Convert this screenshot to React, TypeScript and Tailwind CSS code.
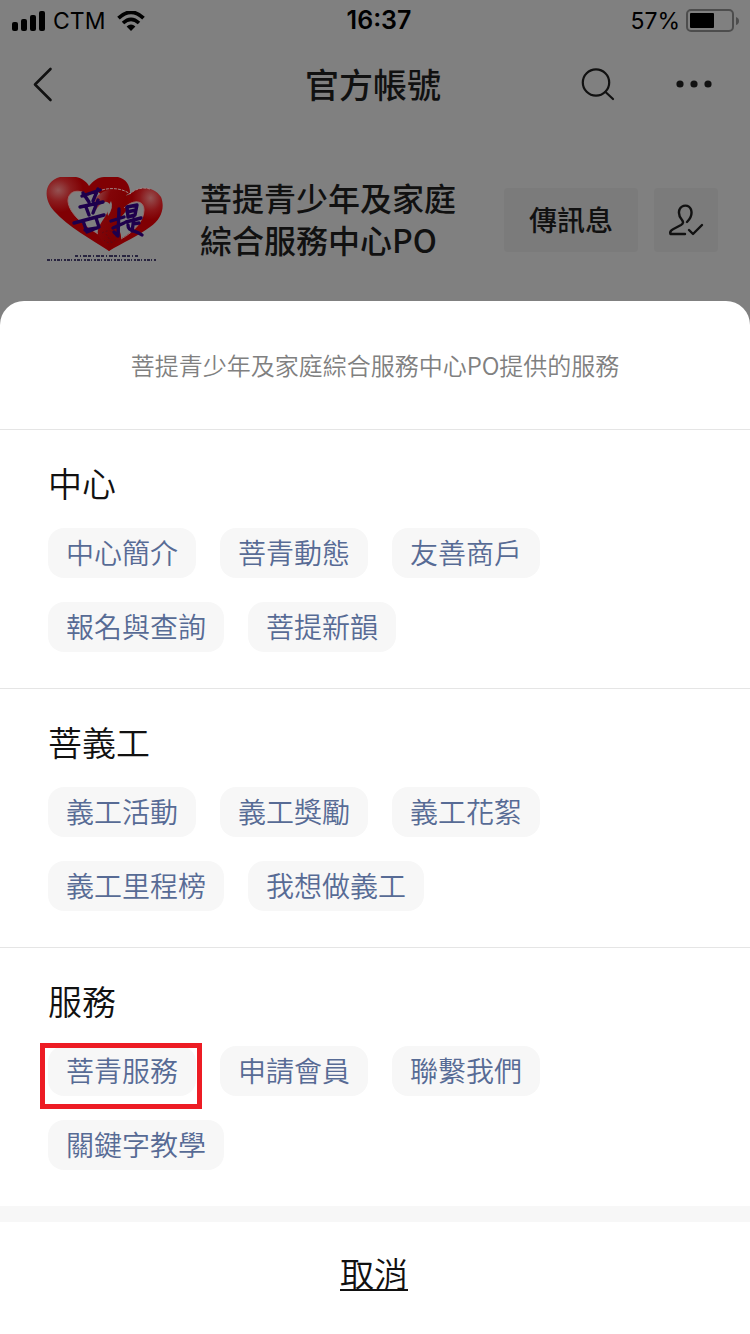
const sections = [
    { title: "中心", items: ["中心簡介", "菩青動態", "友善商戶", "報名與查詢", "菩提新韻"] },
    { title: "菩義工", items: ["義工活動", "義工獎勵", "義工花絮", "義工里程榜", "我想做義工"] },
    { title: "服務", items: ["菩青服務", "申請會員", "聯繫我們", "關鍵字教學"] },
]

const marked = "菩青服務"

function StatusBar() {
    return (
        <div className="grid grid-cols-3 items-center h-10 pt-0.5 px-3 font-['Inter','Liberation_Sans',sans-serif] text-[23px] text-black">
            <div className="flex items-center">
                <svg width="33" height="20" viewBox="0 0 33 20" aria-hidden="true">
                    <rect x="0" y="11" width="6" height="9" rx="2" />
                    <rect x="9" y="8" width="6" height="12" rx="2" />
                    <rect x="18" y="4" width="6" height="16" rx="2" />
                    <rect x="27" y="0" width="6" height="20" rx="2" />
                </svg>
                <span className="ml-2">CTM</span>
                <svg className="ml-3" width="28" height="20" viewBox="0 0 28 20" aria-hidden="true">
                    <path d="M1.5 7.2Q14-4.6 26.5 7.2" fill="none" stroke="black" strokeWidth="3.8" />
                    <path d="M6 12Q14 4.6 22 12" fill="none" stroke="black" strokeWidth="3.6" />
                    <path d="M9.6 15.4Q14 11.6 18.4 15.4L14 20Z" />
                </svg>
            </div>
            <div className="pl-2 text-center text-[25px] font-semibold">16:37</div>
            <div className="flex items-center justify-end">
                <span>57%</span>
                <svg className="ml-1.5 -mr-px" width="53" height="24" viewBox="0 0 53 24" aria-hidden="true">
                    <rect x="1" y="1" width="46" height="21" rx="4" fill="none" stroke="#4d4d4d" strokeWidth="2" />
                    <rect x="4" y="4" width="24" height="15" rx="1" />
                    <path d="M50 8Q53 9 53 12T50 16Z" fill="#4d4d4d" />
                </svg>
            </div>
        </div>
    )
}

function NavBar() {
    return (
        <header className="grid grid-cols-3 items-center h-22 px-8">
            <button type="button" aria-label="返回" className="justify-self-start">
                <svg width="22" height="36" viewBox="0 0 22 36" fill="none" stroke="#111" strokeWidth="2.6" strokeLinecap="round" strokeLinejoin="round">
                    <path d="M18.5 3L3 18.5L18.5 34" />
                </svg>
            </button>
            <h1 className="pb-0.5 pr-1 text-center text-[34px] font-medium whitespace-nowrap">官方帳號</h1>
            <div className="flex items-center justify-end gap-15">
                <button type="button" aria-label="搜尋">
                    <svg width="36" height="34" viewBox="0 0 36 34" fill="none" stroke="#111" strokeWidth="2.2" strokeLinecap="round">
                        <circle cx="16" cy="15.5" r="13.2" />
                        <path d="M25.5 25L33 32" />
                    </svg>
                </button>
                <button type="button" aria-label="更多" className="mr-1.5">
                    <svg width="36" height="8" viewBox="0 0 36 8" fill="#111">
                        <circle cx="4" cy="4" r="3.6" />
                        <circle cx="18" cy="4" r="3.6" />
                        <circle cx="32" cy="4" r="3.6" />
                    </svg>
                </button>
            </div>
        </header>
    )
}

function Logo() {
    return (
        <svg width="118" height="86" viewBox="0 0 118 86" role="img" aria-label="菩提">
            <defs>
                <radialGradient id="shineLeft" cx="0.14" cy="0.18" r="0.3">
                    <stop offset="0" stopColor="#945252" />
                    <stop offset="0.5" stopColor="#8a1c1e" />
                    <stop offset="1" stopColor="#800003" />
                </radialGradient>
                <radialGradient id="shineRight" cx="0.78" cy="0.16" r="0.34">
                    <stop offset="0" stopColor="#945252" />
                    <stop offset="0.6" stopColor="#8a1518" />
                    <stop offset="1" stopColor="#800003" />
                </radialGradient>
                <linearGradient id="ribbon" x1="0" y1="0.1" x2="0.7" y2="0.5">
                    <stop offset="0" stopColor="#8e5555" />
                    <stop offset="0.5" stopColor="#820508" />
                    <stop offset="1" stopColor="#7c0002" />
                </linearGradient>
            </defs>
            {/* left heart, right heart, then the ribbon that ties them */}
            <path fill="url(#shineLeft)" d="M63 74C45 62 22 50 8 34C-4 20-1 4 14 0H30C36 1 41 5 43 9C47 4 52 0 58 0H72C80 2 84 8 84 16L66 26L52 15C48 14 44 16 42 19C36 12 22 12 22 24C23 37 38 48 52 57L64 66Z" />
            <path fill="url(#shineRight)" d="M63 74L62 64L74 62C88 55 98 44 98 33C98 23 87 22 78 31L72 22L84 17C92 8 108 9 115 20C119 30 116 42 104 50C92 59 76 66 63 74Z" />
            <path fill="url(#ribbon)" d="M47 28C51 12 70 8 80 18C86 27 80 36 73 42C70 49 76 56 75 62L63 74L52 58C50 48 62 40 64 28C61 22 55 25 50 33Z" />
            <path fill="none" stroke="#946c6c" strokeWidth="1" d="M42 19C36 12 22 12 22 24C23 37 38 48 52 57M78 31C87 22 98 23 98 33C98 44 88 55 75 62" />
            <path fill="none" stroke="#a18585" strokeWidth="1" strokeDasharray="3 1" d="M56 13C66 10 78 12 84 17C90 11 98 10 104 12" />
            <path fill="#808080" d="M65 24Q68 30 62 39Q60 32 65 24Z" />
            <path fill="none" stroke="#5f0a14" strokeWidth="1" strokeDasharray="2 2" d="M56 56C62 52 70 54 70 60S62 68 58 63M60 57L66 66" />
            <g fill="none" stroke="#1e004c" strokeWidth="3.4" strokeLinecap="round" strokeLinejoin="round">
                <path d="M36 19L54 13M37 16L43 25M52 12L47 24M34 30L57 25M40 30L43 38M52 23L47 36M28 46L58 38M37 44L41 55L53 50L50 41M39 53L51 51" />
                <path d="M65 44L78 40M73 32L72 59L68 55M67 51L78 46M81 30L91 28L89 38L82 40L81 30M81 35L90 33M80 45L95 41M88 42L86 54M87 47L93 46M82 48C82 55 88 52 96 58" />
            </g>
            <path d="M29 79H92" stroke="#28243f" strokeWidth="2" strokeDasharray="3 2 1 2 4 1" />
            <path d="M1 83H110" stroke="#28243f" strokeWidth="2" strokeDasharray="3 1 1 2 2 1" />
        </svg>
    )
}

function Account() {
    return (
        <div className="flex items-center h-30 pl-[46px] pr-8">
            <Logo />
            <h2 className="ml-9 pb-1 flex-1 text-[32px] leading-[42px] font-medium">
                菩提青少年及家庭<br />綜合服務中心PO
            </h2>
            <button type="button" className="h-16 px-[25px] pb-0.5 rounded-sm bg-[#7b7b7b] text-[28px] font-medium">
                傳訊息
            </button>
            <button type="button" aria-label="已關注" className="ml-4 flex items-center justify-center size-16 rounded-sm bg-[#7b7b7b]">
                <svg width="36" height="32" viewBox="0 0 36 32" fill="none" stroke="#111" strokeWidth="2.4" strokeLinecap="round" strokeLinejoin="round">
                    <path d="M17 30H2.5C1.5 27.5 3 26.2 5 25.2L13 21C15.5 19.5 15.5 18 14 16C10.5 12 10.5 8.5 11.5 5.5C14 .3 21 .3 23 5.5C24.3 9.5 23 14 19 18" />
                    <path d="M21 26L25 30L34 21" />
                </svg>
            </button>
        </div>
    )
}

function Chip({ label }: { label: string }) {
    return (
        <li className="relative">
            <button type="button" className="block h-[50px] px-[18px] pb-0.5 rounded-2xl bg-[#f7f7f7] text-[28px] leading-[48px] text-[#576b95]">
                {label}
            </button>
            {label === marked && (
                <span className="absolute -top-[3px] -bottom-[13px] -left-2 -right-1.5 border-5 border-[#ed1c24] pointer-events-none" />
            )}
        </li>
    )
}

function App() {
    return (
        <div className="min-h-screen flex flex-col bg-[#808080] text-[#111] font-['Noto_Sans_CJK_TC',sans-serif]">
            <StatusBar />
            <NavBar />
            <div className="pt-8 pb-[21px]">
                <Account />
            </div>

            <div role="dialog" aria-label="提供的服務" className="flex-1 flex flex-col rounded-t-3xl bg-white font-[350]">
                <p className="h-32 text-center text-2xl leading-[128px] text-[#808080]">
                    菩提青少年及家庭綜合服務中心PO提供的服務
                </p>

                {sections.map((section) => (
                    <section key={section.title} className="border-t border-[#e5e5e5] pt-7 px-12 pb-9">
                        <h3 className="h-[50px] text-[34px] leading-[50px] font-[350]">{section.title}</h3>
                        <ul className="mt-5 flex flex-wrap gap-6 max-w-[560px]">
                            {section.items.map((item) => (
                                <Chip key={item} label={item} />
                            ))}
                        </ul>
                    </section>
                ))}

                <div className="h-4 bg-[#f7f7f7]" />
                <button type="button" className="flex-1 pt-5 pb-8 pr-0.5 text-[34px] underline underline-offset-2 decoration-2">
                    取消
                </button>
            </div>
        </div>
    )
}

export default App
